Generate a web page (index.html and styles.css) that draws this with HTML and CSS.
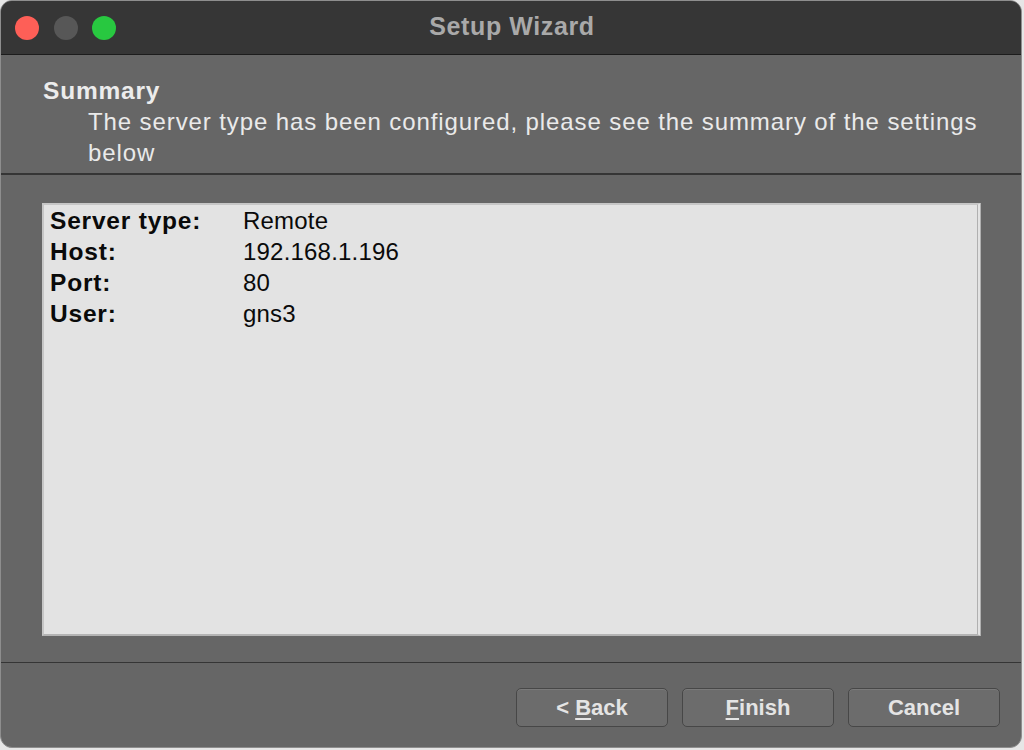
FILE: index.html
```html
<!DOCTYPE html>
<html>
<head>
<meta charset="utf-8">
<link rel="stylesheet" href="styles.css">
</head>
<body>
<div class="window">
  <div class="titlebar">
    <div class="lights">
      <span class="light red"></span>
      <span class="light gray"></span>
      <span class="light green"></span>
    </div>
    <div class="title">Setup Wizard</div>
  </div>
  <div class="header">
    <div class="h-title">Summary</div>
    <div class="h-sub">The server type has been configured, please see the summary of the settings below</div>
  </div>
  <div class="content">
    <div class="box">
      <div class="row"><span class="k">Server type:</span><span class="v">Remote</span></div>
      <div class="row"><span class="k">Host:</span><span class="v">192.168.1.196</span></div>
      <div class="row"><span class="k">Port:</span><span class="v">80</span></div>
      <div class="row"><span class="k">User:</span><span class="v">gns3</span></div>
    </div>
  </div>
  <div class="footer">
    <button class="btn">&lt; <u>B</u>ack</button>
    <button class="btn"><u>F</u>inish</button>
    <button class="btn">Cancel</button>
  </div>
</div>
</body>
</html>
```

FILE: styles.css
```css
html, body {
  margin: 0;
  padding: 0;
  background: #e6e6e6;
}
body {
  width: 1024px;
  height: 750px;
  font-family: "Liberation Sans", Arial, sans-serif;
}
.window {
  width: 1020px;
  height: 746px;
  border: 1px solid #8e8e8e;
  border-radius: 12px;
  overflow: hidden;
  background: #666666;
  display: flex;
  flex-direction: column;
}
.titlebar {
  height: 53px;
  flex: none;
  background: #363636;
  border-bottom: 1px solid #1c1c1c;
  display: flex;
  align-items: center;
  position: relative;
}
.lights {
  display: flex;
  gap: 14.5px;
  padding-left: 14px;
}
.light {
  width: 24px;
  height: 24px;
  border-radius: 50%;
  display: block;
}
.red { background: #fe5f57; }
.gray { background: #575757; }
.green { background: #28c840; }
.title {
  position: absolute;
  left: 0;
  right: 0;
  top: 0;
  bottom: 0;
  display: flex;
  align-items: center;
  justify-content: center;
  color: #a9a9a9;
  font-weight: bold;
  font-size: 25px;
  letter-spacing: 0.6px;
  padding-left: 2px;
  padding-bottom: 2px;
}
.header {
  padding: 20px 20px 5px 42px;
  border-bottom: 2px solid #353535;
  color: #ececec;
  font-size: 24px;
  line-height: 31px;
}
.h-title {
  font-weight: bold;
  font-size: 24.5px;
  letter-spacing: 0.8px;
}
.h-sub {
  padding-left: 45px;
  color: #eaeaea;
  letter-spacing: 0.9px;
}
.content {
  flex: 1;
  padding: 28px 40px 26px 41px;
  border-bottom: 1px solid #353535;
  display: flex;
}
.box {
  flex: 1;
  background: #e3e3e3;
  border-top: 2px solid #c6c6c6;
  border-left: 2px solid #c6c6c6;
  border-bottom: 2px solid #b4b4b4;
  border-right: 4px double #b0b0b0;
  padding: 0 6px 1px;
  color: #0a0a0a;
  font-size: 24px;
  line-height: 31px;
}
.row {
  display: flex;
}
.k {
  width: 193px;
  font-weight: bold;
  font-size: 24.5px;
  letter-spacing: 0.8px;
}
.v {
  letter-spacing: 0.2px;
}
.footer {
  flex: none;
  height: 84px;
  display: flex;
  justify-content: flex-end;
  align-items: flex-start;
  gap: 14px;
  padding: 25px 21px 0 0;
  box-sizing: border-box;
}
.btn {
  width: 152px;
  height: 39px;
  background: #6c6c6c;
  border: 1px solid #474747;
  border-radius: 5px;
  box-shadow: inset 0 1px 0 #7a7a7a;
  color: #e4e4e4;
  font-family: "Liberation Sans", Arial, sans-serif;
  font-weight: bold;
  font-size: 22px;
  padding: 0;
}
.btn u {
  text-decoration-thickness: 2px;
  text-underline-offset: 3px;
}
```
